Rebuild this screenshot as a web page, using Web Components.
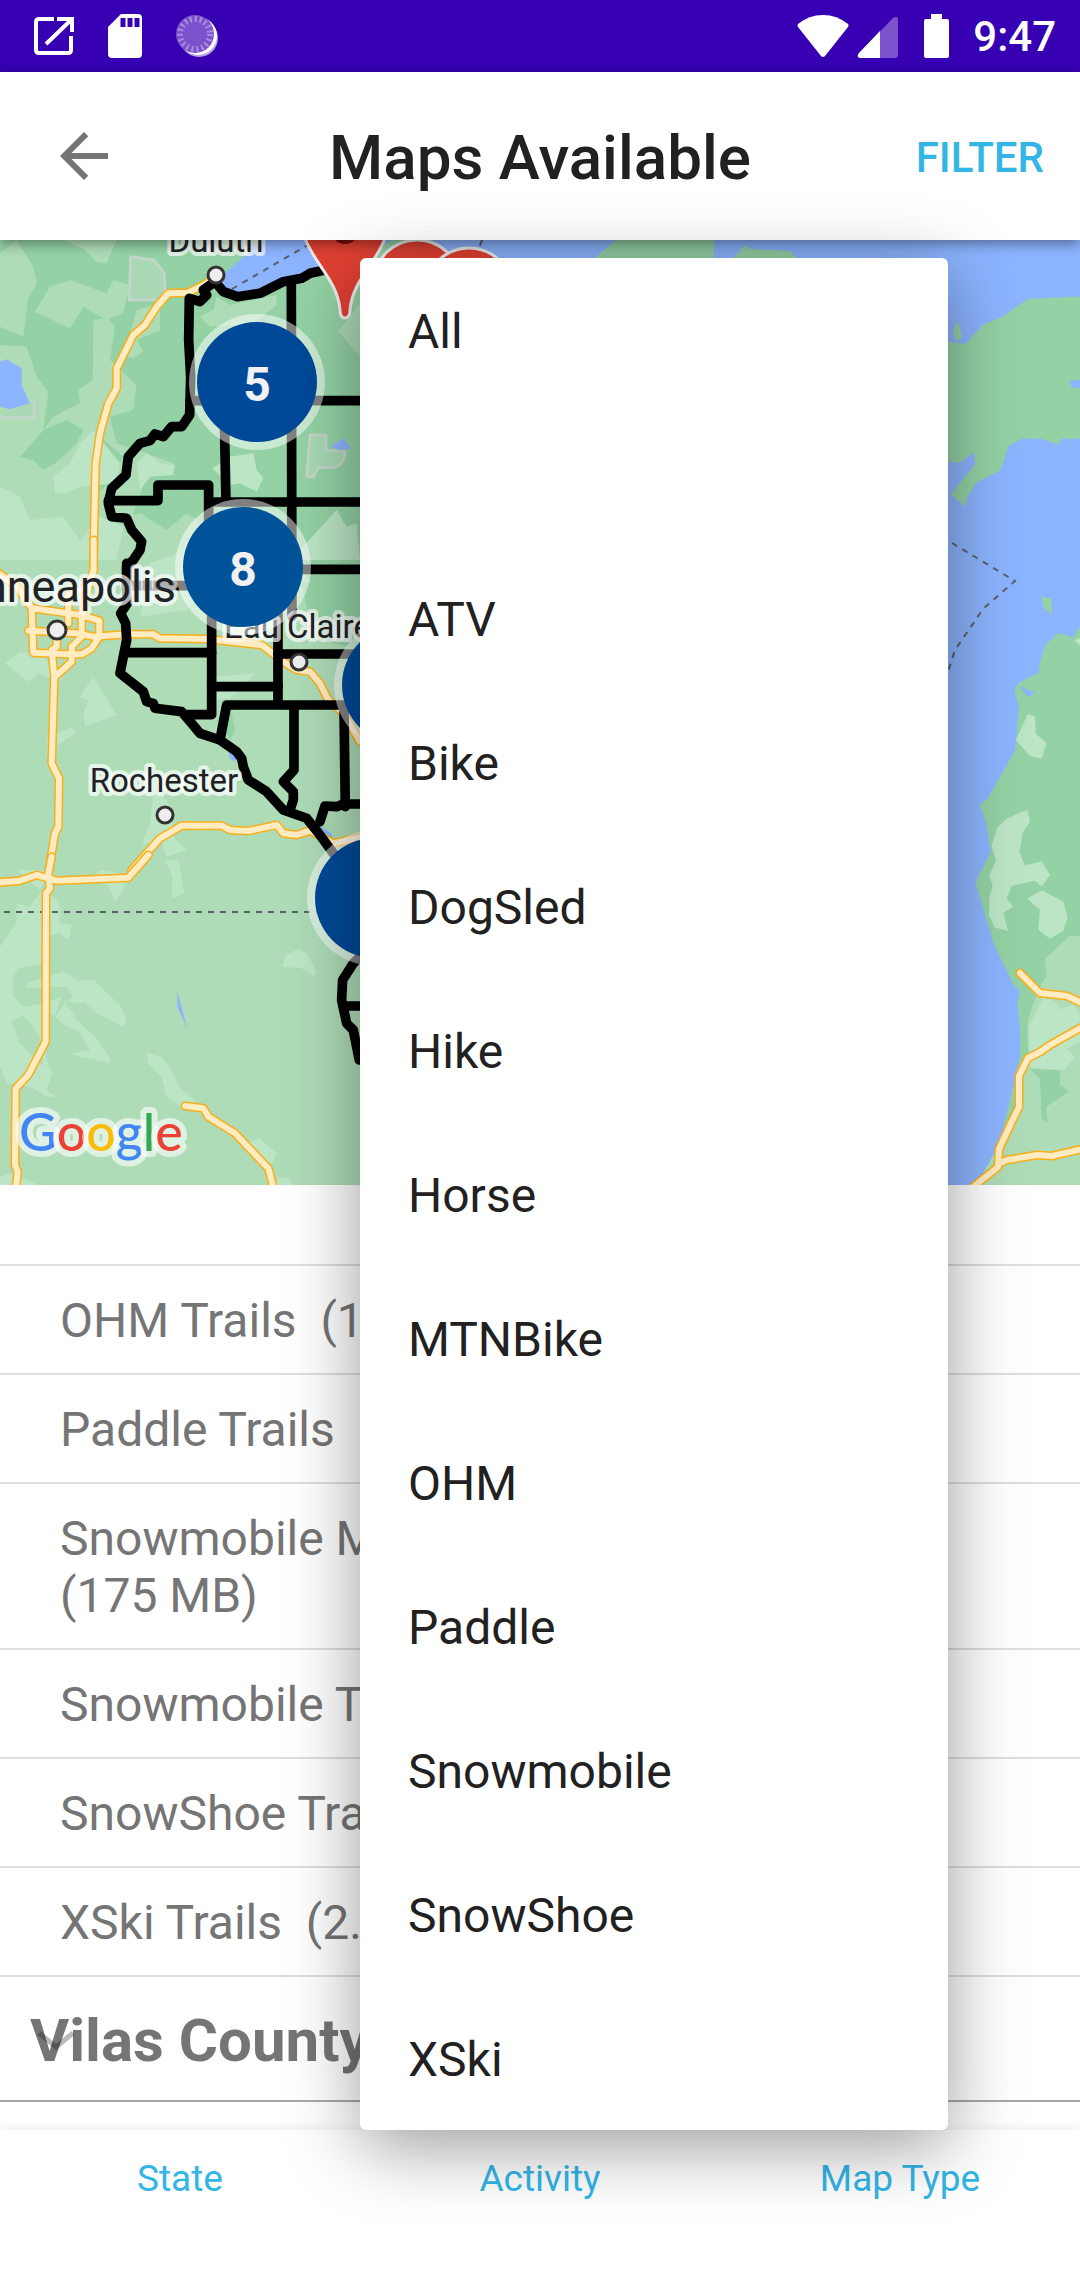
<!DOCTYPE html>
<html lang="en">
<head>
<meta charset="utf-8">
<meta name="viewport" content="width=device-width, initial-scale=1">
<title>Maps Available</title>
<style>
body {
    margin: 0;
    background: #fff;
    font-family: Roboto, "Noto Sans", sans-serif;
    --accent: #33b5e5;
    --text: #212121;
    --text-muted: #757575;
}
</style>
</head>
<body>
<maps-page></maps-page>

<script>
const define = (name, html) => {
    const template = document.createElement('template')
    template.innerHTML = html

    customElements.define(name, class extends HTMLElement {
        constructor() {
            super()
            this.attachShadow({mode: 'open'})
            this.shadowRoot.appendChild(template.content.cloneNode(true))
        }
    })
}

define('status-bar', `
<style>
:host {
    display: flex;
    align-items: center;
    justify-content: space-between;
    height: 72px;
    padding: 0 24px 0 34px;
    background: #3700b3;
    color: #fff;
    font-size: 42px;
    font-weight: 500;
}

div {
    display: flex;
    align-items: center;
}

.notifications {
    gap: 34px;
}

.signal {
    margin: 2px 26px 0 8px;
}

.time {
    margin-left: 24px;
}
</style>

<div class="notifications">
    <svg width="40" height="40" viewBox="0 0 40 40" fill="none" stroke="#fff" stroke-width="4">
        <path d="M20 3H5Q2 3 2 6V34Q2 37 5 37H34Q37 37 37 34V20M23 3H38V16M37 4L12 28"/>
    </svg>
    <svg width="34" height="44" viewBox="0 0 34 44">
        <path fill="#fff" d="M13 0H30Q34 0 34 4V40Q34 44 30 44H4Q0 44 0 40V13Z"/>
        <path stroke="#3700b3" stroke-width="5" d="M15 4v9M22 4v9M29 4v9"/>
    </svg>
    <svg width="42" height="44" viewBox="0 0 42 44">
        <circle cx="23" cy="24" r="19" fill="#b9a1e2"/>
        <circle cx="22" cy="22" r="19" fill="#fff"/>
        <circle cx="19" cy="20" r="19" fill="#7c52cc"/>
        <circle cx="19" cy="20" r="15" fill="none" stroke="#aa8ddf" stroke-width="6" stroke-dasharray="2 3"/>
    </svg>
</div>
<div>
    <svg width="52" height="42" viewBox="0 0 52 42">
        <path fill="#fff" d="M1 9Q12 0 26 0T51 9Q52 10 51 12L28 41Q26 43 24 41L1 12Q0 10 1 9Z"/>
    </svg>
    <svg class="signal" width="41" height="41" viewBox="0 0 41 41">
        <path fill="#7b52cb" d="M2 36L36 1Q41 -2 41 3V38Q41 41 38 41H3Q-1 40 2 36Z"/>
        <path fill="#fff" d="M23 14V41H3Q-1 40 2 36Z"/>
    </svg>
    <svg width="25" height="44" viewBox="0 0 25 44">
        <path fill="#fff" d="M7 0H18V5H23Q25 5 25 7V42Q25 44 23 44H2Q0 44 0 42V7Q0 5 2 5H7Z"/>
    </svg>
    <span class="time">9:47</span>
</div>`)

define('app-header', `
<style>
:host {
    position: relative;
    z-index: 1;
    display: grid;
    grid-template-columns: 1fr auto 1fr;
    align-items: center;
    height: 168px;
    padding: 2px 36px 0;
    box-sizing: border-box;
    background: #fff;
    box-shadow: 0 4px 12px rgba(0, 0, 0, .4);
}

h1 {
    margin: 0;
    color: var(--text);
    font-size: 62px;
    font-weight: 500;
}

button {
    display: block;
    padding: 0;
    border: 0;
    background: none;
    color: var(--accent);
    font: 500 42px Roboto, sans-serif;
}

.back {
    justify-self: start;
    padding: 0 0 2px 12px;
}

.filter {
    justify-self: end;
}
</style>

<button class="back" aria-label="Back">
    <svg width="72" height="72" viewBox="0 0 24 24" display="block">
        <path fill="#757575" d="M20 11H7.83l5.59-5.59L12 4l-8 8 8 8 1.41-1.41L7.83 13H20v-2z"/>
    </svg>
</button>
<h1><slot></slot></h1>
<button class="filter">FILTER</button>`)

// The overlays are kept in three tiles, each drawn at three units to the pixel.
const tiles = [
    {
        top: 230,
        roads: [
            'M660 125L620 160L565 188L505 190L470 230L435 285L400 315L350 415V475L325 520L300 610L287 700L280 1000'
        ],
        borders: [
            'M1150 10L1090 70L975 120L930 130L905 145L850 155L780 190L712 200L670 185L645 155L610 180L620 195L600 215L568 205L566 330L572 440L569 555L545 590L515 590L490 620L465 612L450 632L420 640L385 680L378 735L335 775L325 820L335 860L380 865L395 900L425 935L420 960L400 990L380 1010V1080',
            'M874 160L876 1160', 'M570 512H1090', 'M672 520L678 815',
            'M325 812H474V765H626V1000', 'M626 816H1090'
        ]
    },
    {
        top: 540,
        roads: [
            'M281 0V90L262 150L245 230V290L215 320V365L165 410',
            'M-10 95L50 140L95 205L170 215L240 225L298 242V290L275 325L245 343H205L100 338L95 205',
            'M85 272L230 280L280 290L380 283L460 283L480 295L620 297L785 315L850 365L890 390L930 395L960 430L985 480L1030 520L1080 605',
            'M250 145L205 165V250', 'M170 280V320L155 330L163 410L155 670L177 715L175 860L165 880L145 1000',
            'M395 990L480 895L545 857H665L690 870L745 873L830 855L850 880L890 885L930 872L1000 910L1090 890'
        ],
        borders: [
            'M380 70V150L382 190L362 220L377 250L380 300L372 340L360 400L430 455L440 485L460 490L465 505L545 515L575 550L600 580L660 600L710 635L725 655L730 680L745 720L800 755L850 810L920 835L960 885L1000 940L1050 1010',
            'M385 137H640', 'M635 130V524H560', 'M834 180V490', 'M800 88H1090', 'M380 338H635',
            'M635 440H835', 'M834 342H1090', 'M660 600L680 495H1090', 'M882 500V690L850 725L880 755V780L870 810',
            'M1032 500L1036 800', 'M1090 792H1030L1010 800L975 798L960 845'
        ]
    },
    {
        top: 860,
        roads: [
            'M-10 68L60 62L110 45L170 62L385 53L445 -15',
            'M155 -10L145 40L150 85L138 100L137 545L85 645L47 685L45 915L53 935L45 1010',
            'M555 738L610 745L625 770L705 820L805 925L825 1000'
        ],
        borders: ['M1090 280L1060 310L1028 360L1025 420L1040 490L1060 510L1078 600', 'M1030 438H1090']
    }
]

const paths = list => list.map(d => `<path d="${d}"/>`).join('')
const layer = kind => tiles.map(tile => `
    <g transform="translate(0 ${tile.top}) scale(.3333)">
        ${kind === 'borders'
            ? `<g class="border">${paths(tile.borders)}</g>`
            : `<g class="casing">${paths(tile.roads)}</g><g class="road">${paths(tile.roads)}</g>`}
    </g>`).join('')

const eastRoads = paths([
    'M1020 973L1040 993L1067 996L1082 1003',
    'M973 1187L998 1167L999 1149L1013 1119L1019 1107V1076L1028 1058L1040 1052L1050 1045L1082 1027',
    'M998 1164L1007 1160L1037 1155L1052 1156L1082 1149'
])

const cluster = (x, y, label, fill = '#004999') => `
    <circle cx="${x}" cy="${y}" r="68" fill="#fff" fill-opacity=".5"/>
    <circle cx="${x}" cy="${y}" r="60" fill="${fill}"/>
    <text class="count" x="${x}" y="${y + 19}">${label}</text>`

const pin = (x, y) => `
    <path fill="#e34133" stroke="#efefef" stroke-width="3" d="M${x} ${y}q-5 0 -5 -8c-3 -36 -38 -54 -38 -90a43 42 0 0 1 86 0c0 36 -35 54 -38 90q0 8 -5 8z"/>
    <circle cx="${x}" cy="${y - 88}" r="14" fill="#7a0d0d"/>`

define('trail-map', `
<style>
:host {
    display: block;
    overflow: hidden;
    background: #aedcb7;
}

svg {
    display: block;
    width: 100%;
    height: 100%;
}

.border, .road, .casing {
    fill: none;
    stroke-linejoin: round;
    stroke-linecap: round;
}

.border { stroke: #000; stroke-width: 29; }
.casing { stroke: #fbae17; stroke-width: 27; }
.road { stroke: #ffecc2; stroke-width: 18; }
.east .casing { stroke-width: 9; }
.east .road { stroke-width: 6; }
.water { fill: #8cb4ff; }
.forest { fill: #94d2a5; }
.field { fill: #aedcb7; }
.pale { fill: #bce5c6; }
.reserve { fill: #a9d9b4; stroke: #c5d5cb; stroke-width: 8; }
.ferry { fill: none; stroke: #5b6068; stroke-width: 2; stroke-dasharray: 6 6; }

.label {
    fill: #202124;
    stroke: #fff;
    stroke-opacity: .7;
    stroke-width: 8;
    stroke-linejoin: round;
    paint-order: stroke;
    font-size: 33px;
}

.city { font-size: 45px; }

.count {
    fill: #f1f1f1;
    font-size: 48px;
    font-weight: 700;
    text-anchor: middle;
}

.logo {
    stroke: #fff;
    stroke-opacity: .6;
    stroke-width: 12;
    stroke-linejoin: round;
    paint-order: stroke;
    font: 500 52px Lato, sans-serif;
}

.town { fill: #eee; stroke: #333; stroke-width: 3; }
</style>

<svg viewBox="0 240 1080 945" preserveAspectRatio="xMidYMid slice" role="img" aria-label="Map of trails">
    <g transform="translate(0 230) scale(.3333)">
        <path class="forest" d="M0 0H1300V1300H1080L1020 1140L960 1100L900 1000L860 930L640 900L560 850L500 900L420 850L330 880L280 840L200 790L110 790L60 760L0 770Z"/>
        <path class="field" d="M280 270L325 265L345 290L330 390L410 465L400 540L330 560L350 640L440 670L520 700V730L440 740L400 850L460 930L0 1000V560L130 600L160 560L240 520L235 480L278 450Z"/>
        <path class="forest" d="M130 600L200 570L250 600L230 640L190 680L165 700L130 720L100 690L60 680ZM300 620L370 680L330 760L290 790Z"/>
        <path class="field" d="M0 70L50 30L100 110L110 160L85 205L70 320L0 290ZM105 245L150 170L210 150L320 190L340 150L390 165L370 250L320 270L250 230L210 295ZM190 30H350L320 100L290 95L255 60ZM0 345L80 350L110 440L145 485L130 600L60 680L40 640L60 590L0 560ZM600 260L640 240L650 200L690 225L830 195V225L760 280L630 290ZM410 240L480 220V300L410 330L430 365L400 385L370 375ZM1010 310L1080 220V380L1020 310Z"/>
        <path class="pale" d="M0 770L60 800L90 870L190 860L240 930L300 860L370 890L350 990H0ZM160 740L210 700L240 640L280 600L360 700L350 760L240 770L200 790H165ZM410 700L440 670L480 700L525 705L520 735L450 740L420 780ZM637 715L690 680L760 670L770 720L790 745L770 785L720 760L690 765ZM900 960L1010 840L1040 890L1070 880L1080 990H900Z"/>
        <path class="water" d="M645 155L720 90L790 20L900 0H1250L1180 30L1090 70L975 120L850 150L770 185L712 190L670 175ZM0 395L20 388L65 415V465L90 520L30 538L0 530Z"/>
        <path class="reserve" d="M392 80L462 90L493 130L495 210H388ZM930 615H978V660L1035 665Q1035 700 1005 713H955L940 742L920 740ZM0 563H102V515"/>
        <path class="water" d="M993 650L1028 625L1055 655L1020 660Z"/>
    </g>
    <g transform="translate(0 540) scale(.3333)">
        <path class="pale" d="M15 370L60 335L130 350L190 420L150 415L120 400L85 425ZM240 470L280 410L350 525L255 560L250 520L265 480ZM140 590L220 560L225 580L175 615L140 650ZM650 410L765 400L730 440L690 475L640 480ZM430 900L450 850L460 760L480 750L510 800L520 890L560 930L500 950L480 895L430 915ZM450 70L590 20L640 120L560 210L420 230Z"/>
        <path class="forest" d="M905 130L990 120L1080 160V330L970 300L920 200ZM650 540L690 495L705 570L690 600Z"/>
        <path class="water" d="M685 635L710 650L705 665L690 655ZM958 857L995 880L998 892L975 893Z"/>
    </g>
    <g transform="translate(0 860) scale(.3333)">
        <path class="pale" d="M0 260L50 190V130L90 140L130 85L180 130V190L215 195L205 240L180 220L135 230V310L55 325L40 350V410L70 440L135 430L185 410L160 480L200 420L225 430L255 428L290 460L370 500L380 475L360 435L280 360L235 362L190 335L80 370V385L200 380L218 410L195 435L220 455L230 480L290 535L330 595V610L275 597L205 583L270 570L240 515L200 500L140 450V600L158 640L140 690L170 710H140L90 680L20 670L0 620ZM440 580L485 590L520 640L535 680L590 725L550 745L500 710L485 650L445 610ZM855 290L895 265L920 280L950 335L940 348L905 325L848 320ZM740 850L780 835L830 880L810 920L770 880ZM60 30L150 30L120 90L50 30ZM300 30L360 40L375 80L345 125L325 75L270 60ZM495 0H535L545 50L552 100L515 115L517 50ZM830 950L860 955L880 975H830ZM0 950L30 940L110 972V980H0Z"/>
        <path class="field" d="M35 485L70 465L120 530L130 620L60 550Z"/>
        <path class="water" d="M532 393L562 507L532 440Z"/>
    </g>
    <path class="water" d="M410 240H1080V1190H900V262H410Z"/>
    <path class="forest" d="M590 262L616 240H714V262ZM730 262L745 245L750 249L790 251L800 262Z"/>
    <g transform="translate(940 240) scale(.3333 .606)">
        <path class="forest" d="M0 165L75 172L130 140L185 127L265 97L430 93V328H365L355 338L305 328H245L205 340L182 380L110 400L80 425L78 440L32 420L105 370L102 350L58 368L0 363ZM38 148L55 135L66 160L48 168ZM304 588L334 592L336 617L312 608ZM430 630L398 656L355 648L317 668L298 700L297 714L238 730L222 742L237 770L225 842L145 920L118 932L138 960L152 1010L106 1060L160 1160L220 1228L240 1240L232 1260L240 1300V1350L170 1510L100 1568H430Z"/>
        <path class="field" d="M430 1150L390 1148L315 1186L320 1215L300 1230L262 1290L265 1345L235 1380V1430L170 1500L100 1568H430Z"/>
        <path class="pale" d="M228 825L263 782L285 786L288 815L320 830L305 855L270 852ZM403 660L430 655V675ZM155 1000L172 970L200 955L262 940L270 960L248 978L238 1010L255 1032L305 1025L330 1048L305 1067L285 1057L215 1066L200 1087L220 1100L190 1110L204 1140L165 1135L147 1115L148 1085L158 1065L148 1048L168 1024ZM262 1087L305 1073L370 1092L383 1118L370 1140L330 1153L295 1138L300 1105ZM265 1300L310 1250L340 1255L365 1270L400 1260L430 1290V1320L380 1335L405 1350L370 1370L270 1365Z"/>
        <path class="forest" d="M270 1368L360 1370V1395L388 1405L320 1430L322 1456L305 1450L300 1385Z"/>
        <path class="water" d="M430 230L388 233L395 243L430 245ZM238 736L288 748L262 753Z"/>
    </g>
    <path class="ferry" d="M232 289L320 238M482 240L479 248M4 912H320M952 543L1015 581L983 609L955 650L948 672"/>
    ${layer('roads')}
    <g class="east"><g class="casing">${eastRoads}</g><g class="road">${eastRoads}</g></g>
    ${layer('borders')}
    <circle class="town" cx="216" cy="275" r="8"/>
    <circle class="town" cx="57" cy="630" r="9"/>
    <circle class="town" cx="299" cy="662" r="8"/>
    <circle class="town" cx="165" cy="815" r="8"/>
    <text class="label" x="216" y="252" text-anchor="middle">Duluth</text>
    <text class="label city" x="176" y="602" text-anchor="end">Minneapolis</text>
    <text class="label" x="224" y="638">Eau Claire</text>
    <text class="label" x="164" y="792" text-anchor="middle">Rochester</text>
    <text class="logo" x="19" y="1151"><tspan fill="#4285f4">G</tspan><tspan fill="#ea4335">o</tspan><tspan fill="#fbbc05">o</tspan><tspan fill="#4285f4">g</tspan><tspan fill="#34a853">l</tspan><tspan fill="#ea4335">e</tspan></text>
    ${pin(417, 380)}
    ${pin(469, 388)}
    ${pin(345, 318)}
    ${cluster(257, 382, '5')}
    ${cluster(243, 567, '8', '#005399')}
    ${cluster(402, 685, '')}
    ${cluster(375, 898, '')}
</svg>`)

define('trail-row', `
<style>
:host {
    display: block;
    min-height: 57px;
    padding: 26px 60px 24px;
    border-bottom: 2px solid #dedede;
    color: var(--text-muted);
    font-size: 48px;
    line-height: 57px;
}

:host([scrolled]) {
    min-height: 29px;
}
</style>
<slot></slot>`)

define('county-row', `
<style>
:host {
    display: grid;
    align-items: center;
    height: 119px;
    padding: 4px 30px 0;
    border-bottom: 2px solid #a8a8a8;
    color: var(--text-muted);
}

h2, svg {
    grid-area: 1 / 1;
    margin: 0;
    font-size: 60px;
    font-weight: 700;
}

svg {
    margin-left: 7px;
}
</style>
<h2><slot></slot></h2>
<svg width="38" height="20" viewBox="0 0 38 20" fill="none" stroke="#000" stroke-opacity=".27" stroke-width="5">
    <path d="M2 2L19 16L36 2"/>
</svg>`)

const menuTemplate = document.createElement('template')

menuTemplate.innerHTML = `
<style>
:host {
    display: flex;
    flex-direction: column;
    border-radius: 6px;
    background: #fff;
    box-shadow: 0 16px 72px rgba(0, 0, 0, .4);
}

button {
    height: 144px;
    padding: 2px 48px 0;
    border: 0;
    background: none;
    color: var(--text);
    font: 48px Roboto, sans-serif;
    text-align: left;
}
</style>`

class ActivityMenu extends HTMLElement {
    constructor() {
        super()
        this.attachShadow({mode: 'open'})
    }

    connectedCallback() {
        this.shadowRoot.innerHTML = ''
        this.shadowRoot.appendChild(menuTemplate.content.cloneNode(true))

        for (const activity of this.getAttribute('items').split(',')) {
            const button = document.createElement('button')
            button.setAttribute('role', 'menuitem')
            button.textContent = activity
            this.shadowRoot.appendChild(button)
        }
    }
}

customElements.define('activity-menu', ActivityMenu)

define('filter-tabs', `
<style>
:host {
    position: relative;
    z-index: 2;
    display: grid;
    grid-template-columns: repeat(3, 1fr);
    height: 96px;
    box-shadow: 0 -2px 10px rgba(0, 0, 0, .08);
    background: #fff;
}

button {
    padding: 0;
    border: 0;
    background: none;
    color: var(--accent);
    font: 37px Roboto, sans-serif;
}

activity-menu {
    position: absolute;
    bottom: 100%;
    left: calc(100% / 3);
    width: 588px;
}
</style>

<button>State</button>
<button>Activity</button>
<button>Map Type</button>
<activity-menu role="menu" items="All,,ATV,Bike,DogSled,Hike,Horse,MTNBike,OHM,Paddle,Snowmobile,SnowShoe,XSki"></activity-menu>`)

define('maps-page', `
<style>
:host {
    display: flex;
    flex-direction: column;
    height: 100vh;
}

trail-map, .trails {
    flex: 1 1 0;
    min-height: 0;
}

.trails {
    overflow: hidden;
}

.system-nav {
    position: relative;
    z-index: 3;
    height: 54px;
    background: #fff;
}
</style>

<status-bar></status-bar>
<app-header>Maps Available</app-header>
<trail-map></trail-map>
<main class="trails">
    <trail-row scrolled></trail-row>
    <trail-row>OHM Trails&nbsp; (1</trail-row>
    <trail-row>Paddle Trails</trail-row>
    <trail-row>Snowmobile M<br>(175 MB)</trail-row>
    <trail-row>Snowmobile T</trail-row>
    <trail-row>SnowShoe Tra</trail-row>
    <trail-row>XSki Trails&nbsp; (2.</trail-row>
    <county-row>Vilas County</county-row>
</main>
<filter-tabs></filter-tabs>
<div class="system-nav"></div>`)
</script>
</body>
</html>
